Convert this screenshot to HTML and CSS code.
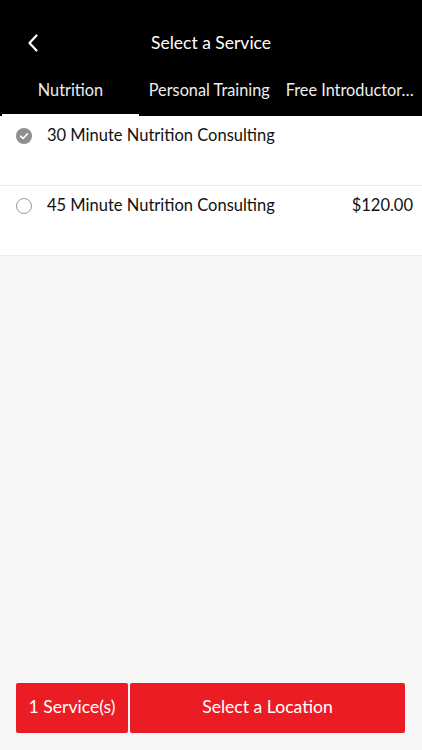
FILE: index.html
```html
<!DOCTYPE html>
<html>
<head>
<meta charset="utf-8">
<link rel="stylesheet" href="styles.css">
</head>
<body>
<div class="app">
  <header class="header">
    <div class="titlebar">
      <svg class="back" width="14" height="20" viewBox="0 0 14 20"><path d="M10.5 2.5 L3.5 10 L10.5 17.5" fill="none" stroke="#fff" stroke-width="2.2" stroke-linecap="round" stroke-linejoin="round"/></svg>
      <div class="title">Select a Service</div>
    </div>
    <nav class="tabs">
      <div class="tab active">Nutrition</div>
      <div class="tab">Personal Training</div>
      <div class="tab">Free Introductor…</div>
    </nav>
  </header>
  <ul class="list">
    <li class="row">
      <svg class="radio" width="18" height="18" viewBox="0 0 18 18"><circle cx="9" cy="9" r="8" fill="#8e8e8e"/><path d="M5.5 9.2 L8 11.5 L12.5 6.8" fill="none" stroke="#fff" stroke-width="1.6" stroke-linecap="round" stroke-linejoin="round"/></svg>
      <span class="name">30 Minute Nutrition Consulting</span>
      <span class="price"></span>
    </li>
    <li class="row">
      <svg class="radio" width="18" height="18" viewBox="0 0 18 18"><circle cx="9" cy="9" r="7.5" fill="#fff" stroke="#9a9a9a" stroke-width="1"/></svg>
      <span class="name">45 Minute Nutrition Consulting</span>
      <span class="price">$120.00</span>
    </li>
  </ul>
  <div class="spacer"></div>
  <footer class="footer">
    <button class="btn count">1 Service(s)</button>
    <button class="btn next">Select a Location</button>
  </footer>
</div>
</body>
</html>
```
FILE: styles.css
```css
* { box-sizing: border-box; }
html, body { margin: 0; padding: 0; }
body {
  font-family: Lato, "Noto Sans", sans-serif;
  background: #f6f6f6;
  color: #111;
}
.app {
  width: 422px;
  height: 750px;
  display: flex;
  flex-direction: column;
}
.header {
  background: #000;
  color: #fff;
  height: 116px;
  display: flex;
  flex-direction: column;
}
.titlebar {
  height: 68px;
  padding-top: 17px;
  display: flex;
  align-items: center;
  justify-content: center;
  position: relative;
}
.back {
  position: absolute;
  left: 26px;
  top: 33px;
}
.title {
  font-size: 17.5px;
}
.tabs {
  flex: 1;
  display: flex;
  padding: 0 2px;
}
.tab {
  flex: 1;
  font-size: 16.3px;
  color: #eee;
  text-align: center;
  white-space: nowrap;
  padding: 12px 0 0;
  border-bottom: 2px solid transparent;
}
.tab.active {
  border-bottom-color: #fff;
  flex: 0 0 137px;
}
.list {
  list-style: none;
  margin: 0;
  padding: 0;
  background: #fff;
}
.row {
  height: 70px;
  display: flex;
  align-items: flex-start;
  padding: 9px 9px 0 15px;
  border-bottom: 1px solid #ececec;
  font-size: 16.5px;
}
.radio {
  flex: none;
  margin-top: 2px;
}
.name {
  flex: 1;
  margin-left: 14px;
}
.price {
  flex: none;
}
.spacer { flex: 1; }
.footer {
  display: flex;
  gap: 2px;
  padding: 0 17px 17px 16px;
}
.btn {
  height: 50px;
  border: none;
  border-radius: 2px;
  background: #ec1c24;
  color: #fff;
  font-family: inherit;
  font-size: 17.6px;
  padding: 0 0 3px;
}
.count { width: 112px; }
.next { flex: 1; }
```
